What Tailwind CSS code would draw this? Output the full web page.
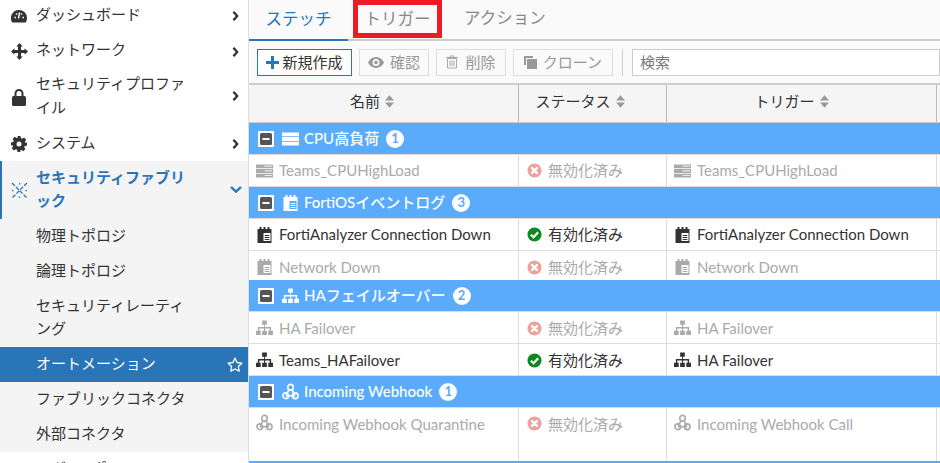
<!DOCTYPE html>
<html lang="ja">
<head>
  <meta charset="UTF-8">
  <title>オートメーション</title>
  <script src="https://cdn.jsdelivr.net/npm/@tailwindcss/browser@4"></script>
</head>
<body class="h-[463px] w-[940px] overflow-hidden bg-white font-['Lato','Noto_Sans_CJK_JP',sans-serif] text-[15px] text-[#333]">

<svg class="hidden">
  <symbol id="i-server" viewBox="0 0 18 16"><path fill="currentColor" d="M0 1h18v4H0zM0 6h18v4H0zM0 11h18v4H0z"/><path fill="#fff" fill-opacity=".75" d="M9 2.200h8v1.200H9zM9 7.200h8v1.200H9zM9 12.200h8v1.200H9z"/></symbol>
  <symbol id="i-log" viewBox="0 0 16 16"><path fill="currentColor" d="M1 2h2V0h2v2h2V0h2v2h2V0h2v2h2v14H1zM7 6v8h7V6z"/><path fill="currentColor" d="M8.200 8h4.600v1H8.200zM8.200 10h4.600v1H8.200zM8.200 12h4.600v1H8.200z"/></symbol>
  <symbol id="i-site" viewBox="0 0 18 16"><path fill="currentColor" d="M6.500 0h5v4.500h-2V7h6.500v4h2v4.500h-5V11h1.500V8.500H9.700V11h1.800v4.500h-5V11h2V8.500H3.500V11H5v4.500H0V11h2V7h6.500V4.500h-2z"/></symbol>
  <symbol id="i-hook" viewBox="0 0 18 18"><g fill="none" stroke="currentColor" stroke-width="1.700"><circle cx="9" cy="4.500" r="3"/><circle cx="4" cy="13.500" r="3"/><circle cx="14" cy="13.500" r="3"/><path d="M7.500 7 4.500 12.500M4 13.500h10M10.500 7l3 5.500"/></g></symbol>
  <symbol id="i-x" viewBox="0 0 16 16"><circle cx="8" cy="8" r="7.500" fill="currentColor"/><path stroke="#fff" stroke-width="2.600" stroke-linecap="round" d="M5.400 5.400l5.200 5.200M10.600 5.400l-5.200 5.200"/></symbol>
  <symbol id="i-ok" viewBox="0 0 16 16"><circle cx="8" cy="8" r="7.500" fill="currentColor"/><path fill="none" stroke="#fff" stroke-width="2.400" d="M4.200 8.200l2.800 2.700 4.900-5.200"/></symbol>
  <symbol id="i-sort" viewBox="0 0 10 14"><path fill="currentColor" d="M5 0l5 6H0zM5 14l-5-6h10z"/></symbol>
  <symbol id="i-right" viewBox="0 0 8 12"><path fill="none" stroke="currentColor" stroke-width="2.800" d="M1.500 1l4.500 5-4.500 5"/></symbol>
  <symbol id="i-minus" viewBox="0 0 16 16"><path fill="#fff" d="M0 0h16v16H0z"/><rect x="2" y="2" width="12" height="12" rx="1.500" fill="#555"/><path fill="#fff" d="M4.500 7h7v2h-7z"/></symbol>
</svg>

<div class="flex h-full">
  <!-- Sidebar -->
  <nav class="h-full w-[249px] shrink-0 overflow-hidden border-r border-[#ddd]">
    <div class="-mt-[4px]">
      <a class="flex h-[36px] items-center"><span class="flex w-[36px] justify-center pl-[2px] pt-[4px]"><svg class="h-[14px] w-[16px]" viewBox="0 1 16 13"><path fill="#333" d="M8 1.500a8 8 0 0 1 8 8c0 1.700-.5 3.200-1.300 4.500H1.300A8 8 0 0 1 8 1.500z"/><path stroke="#fff" stroke-width="1.500" d="M8.500 4 7.500 10M3.500 9h1.500M11.500 9H13M5 5l1 1M11 5l-1 1"/></svg></span><span>ダッシュボード</span><svg class="ml-auto mr-[9px] mt-[4px] h-[10px] w-[7px]"><use href="#i-right"/></svg></a>
      <a class="flex h-[35px] items-center"><span class="flex w-[36px] justify-center pl-[2px] pt-[3px]"><svg class="h-[17px] w-[17px]" viewBox="0 0 17 17"><path fill="#333" d="M8.500 0l3.200 3.400H10v3.600h3.600V5.300L17 8.500l-3.400 3.200V10H10v3.600h1.700L8.500 17l-3.200-3.400H7V10H3.400v1.700L0 8.500l3.400-3.200V7H7V3.400H5.300z"/></svg></span><span>ネットワーク</span><svg class="ml-auto mr-[9px] mt-[4px] h-[10px] w-[7px]"><use href="#i-right"/></svg></a>
      <a class="flex h-[58px] items-center"><span class="flex w-[36px] justify-center pl-[2px] pt-[2px]"><svg class="h-[17px] w-[14px]" viewBox="0 0 14 17"><path fill="none" stroke="#333" stroke-width="2" d="M3.500 8V4.500a3.500 3.500 0 0 1 7 0V8"/><rect y="7" width="14" height="10" rx="1.500" fill="#333"/></svg></span><span class="pb-[2px] leading-[24px]">セキュリティプロファ<br>イル</span><svg class="ml-auto mr-[9px] h-[10px] w-[7px]"><use href="#i-right"/></svg></a>
      <a class="flex h-[36px] items-center"><span class="flex w-[36px] justify-center pl-[2px] pt-[1px]"><svg class="h-[16px] w-[16px]" viewBox="0 0 16 16"><path fill="#333" d="M6.500 0h3l.4 2.200 1.300.6 1.900-1.200 2.100 2.100-1.200 1.900.6 1.300L16 6.500v3l-2.200.4-.6 1.300 1.200 1.900-2.100 2.100-1.900-1.200-1.300.6L9.500 16h-3l-.4-2.200-1.300-.6-1.900 1.200-2.100-2.100 1.200-1.900-.6-1.300L0 9.500v-3l2.200-.4.600-1.300L1.600 2.900l2.100-2.100 1.900 1.200 1.300-.6zM8 5.500a2.500 2.500 0 1 0 0 5 2.500 2.500 0 0 0 0-5z"/></svg></span><span class="pb-[1px]">システム</span><svg class="ml-auto mr-[9px] mt-[2px] h-[10px] w-[7px]"><use href="#i-right"/></svg></a>

      <div class="bg-[#f4f4f4]">
        <a class="flex h-[58px] items-center border-l-2 border-[#2a74b8] font-bold text-[#2a74b8]"><span class="flex w-[34px] justify-center pl-[1px]"><svg class="h-[17px] w-[17px]" viewBox="0 0 17 17"><path fill="none" stroke="#2a74b8" stroke-width="1.300" stroke-dasharray="4 1.500" d="M1 1l15 15M16 1 1 16"/><path fill="#2a74b8" d="M8 1h1.200v1.500H8zM8 14.500h1.200V16H8zM1 8h1.500v1.200H1zM14.500 8H16v1.200h-1.500z"/></svg></span><span class="pb-[2px] leading-[23px]">セキュリティファブリ<br>ック</span><svg class="ml-auto mr-[6px] h-[8px] w-[12px]" viewBox="0 0 12 8"><path fill="none" stroke="#2a74b8" stroke-width="2.400" d="M1 1l5 4.700L11 1"/></svg></a>
        <a class="flex h-[35px] items-center pb-[2px] pl-[36px]">物理トポロジ</a>
        <a class="flex h-[35px] items-center pb-[2px] pl-[36px]">論理トポロジ</a>
        <a class="flex h-[58px] items-center pb-[2px] pl-[36px] leading-[23px]"><span>セキュリティレーティ<br>ング</span></a>
        <a class="flex h-[35px] items-center bg-[#2a74b8] pb-[2px] pl-[36px] text-white">オートメーション<svg class="ml-auto mr-[5px] mt-[2px] h-[16px] w-[16px]" viewBox="0 0 16 16"><path fill="none" stroke="#fff" stroke-width="1.300" stroke-linejoin="round" d="M8 1.200l2.100 4.300 4.700.7-3.400 3.300.8 4.700L8 12l-4.200 2.200.8-4.700L1.200 6.200l4.700-.7z"/></svg></a>
        <a class="flex h-[35px] items-center pb-[2px] pl-[36px]">ファブリックコネクタ</a>
        <a class="flex h-[35px] items-center pb-[2px] pl-[36px]">外部コネクタ</a>
      </div>
      <a class="flex h-[35px] items-center pb-[2px] pl-[36px]">ログ&amp;レポート</a>
    </div>
  </nav>

  <!-- Main -->
  <main class="min-w-0 flex-1 bg-[#fafafa]">
    <!-- Tabs -->
    <div class="flex h-[41px] border-b-2 border-[#ccc] text-[16.5px] text-[#888]">
      <a class="-mb-[2px] flex h-[41px] w-[99px] items-center justify-center border-b-2 border-[#2a74b8] text-[#2a74b8]">ステッチ</a>
      <a class="ml-[5px] flex h-[38px] w-[89px] items-center justify-center border-[5px] border-[#ed1c24]">トリガー</a>
      <a class="ml-[22px] flex h-[36px] items-center">アクション</a>
    </div>

    <!-- Toolbar -->
    <div class="flex h-[42px] items-center gap-[7px] pl-[8px] text-[#999]">
      <button class="flex h-[27px] w-[95px] items-center justify-center gap-[3px] border border-[#2a74b8] bg-white text-[#2a74b8]"><svg class="h-[13px] w-[13px]" viewBox="0 0 13 13"><path fill="#2a74b8" d="M5 0h3v5h5v3H8v5H5V8H0V5h5z"/></svg><span class="text-[#333]">新規作成</span></button>
      <button class="flex h-[27px] w-[70px] items-center justify-center gap-[6px] border border-[#ddd]"><svg class="h-[11px] w-[16px]" viewBox="0 0 16 11"><path fill="#999" fill-rule="evenodd" d="M8 0c3.500 0 6.500 2.200 8 5.500C14.500 8.800 11.500 11 8 11S1.500 8.800 0 5.500C1.500 2.200 4.500 0 8 0zm0 2a3.500 3.500 0 1 0 0 7 3.500 3.500 0 0 0 0-7z"/><circle cx="8" cy="5.500" r="1.800" fill="#999"/></svg>確認</button>
      <button class="flex h-[27px] w-[70px] items-center justify-center gap-[7px] border border-[#ddd]"><svg class="h-[14px] w-[12px]" viewBox="0 0 12 14"><path fill="none" stroke="#aaa" d="M1.500 3.500h9v9.500h-9zM0 2.500h12M4 2.500V1h4v1.500M4 5.500V11M6 5.500V11M8 5.500V11"/></svg>削除</button>
      <button class="flex h-[27px] w-[100px] items-center justify-center gap-[6px] border border-[#ddd]"><svg class="h-[13px] w-[13px]" viewBox="0 0 13 13"><path fill="#999" d="M3 3h10v10H3z"/><path fill="#999" d="M0 0h9v2H2v7H0z"/></svg>クローン</button>
      <span class="ml-[2px] h-[27px] w-px bg-[#ccc]"></span>
      <input class="ml-[2px] h-[27px] flex-1 border border-[#ccc] bg-white px-[7px] text-[#333] placeholder:text-[#777]" placeholder="検索">
    </div>

    <!-- Header -->
    <div class="flex h-[40px] border-t-2 border-b border-[#ccc] bg-[#f5f5f5]">
      <div class="flex w-[270px] items-center justify-center gap-[5px] border-r border-[#bbb] pb-[4px] pr-[23px]">名前<svg class="h-[13px] w-[9px] text-[#999]"><use href="#i-sort"/></svg></div>
      <div class="flex w-[148px] items-center justify-center gap-[5px] border-r border-[#bbb] pb-[4px] pr-[25px]">ステータス<svg class="h-[13px] w-[9px] text-[#999]"><use href="#i-sort"/></svg></div>
      <div class="flex w-[270px] items-center justify-center gap-[5px] border-r border-[#bbb] pb-[4px] pr-[20px]">トリガー<svg class="h-[13px] w-[9px] text-[#999]"><use href="#i-sort"/></svg></div>
    </div>

    <!-- Table -->
    <div class="bg-white">
      <div class="flex h-[32px] items-center border-b border-[#ddd] bg-[#5aabfc] font-medium text-white"><svg class="ml-[9px] h-[16px] w-[16px]"><use href="#i-minus"/></svg><svg class="ml-[8px] h-[16px] w-[17px]"><use href="#i-server"/></svg><span class="ml-[5px]">CPU高負荷</span><span class="ml-[7px] flex h-[18px] w-[18px] items-center justify-center rounded-full bg-white text-[13px] font-bold text-[#5aabfc]">1</span></div>
      <div class="flex h-[32px] border-b border-[#ddd] text-[#aaa]">
        <div class="flex w-[270px] items-center border-r border-[#ddd] pl-[7px]"><svg class="mr-[6px] h-[16px] w-[17px]"><use href="#i-server"/></svg>Teams_CPUHighLoad</div>
        <div class="flex w-[148px] items-center border-r border-[#ddd] pl-[8px]"><svg class="mr-[6px] h-[15px] w-[15px] text-[#eba29c]"><use href="#i-x"/></svg>無効化済み</div>
        <div class="flex w-[270px] items-center border-r border-[#ddd] pl-[7px]"><svg class="mr-[6px] h-[16px] w-[17px]"><use href="#i-server"/></svg>Teams_CPUHighLoad</div>
      </div>

      <div class="flex h-[32px] items-center border-b border-[#ddd] bg-[#5aabfc] font-medium text-white"><svg class="ml-[9px] h-[16px] w-[16px]"><use href="#i-minus"/></svg><svg class="ml-[8px] h-[16px] w-[17px]"><use href="#i-log"/></svg><span class="ml-[5px]">FortiOSイベントログ</span><span class="ml-[7px] flex h-[18px] w-[18px] items-center justify-center rounded-full bg-white text-[13px] font-bold text-[#5aabfc]">3</span></div>
      <div class="flex h-[32px] border-b border-[#ddd]">
        <div class="flex w-[270px] items-center border-r border-[#ddd] pl-[7px]"><svg class="mr-[6px] h-[16px] w-[17px]"><use href="#i-log"/></svg>FortiAnalyzer Connection Down</div>
        <div class="flex w-[148px] items-center border-r border-[#ddd] pl-[8px]"><svg class="mr-[6px] h-[15px] w-[15px] text-[#0b8a1e]"><use href="#i-ok"/></svg>有効化済み</div>
        <div class="flex w-[270px] items-center border-r border-[#ddd] pl-[7px]"><svg class="mr-[6px] h-[16px] w-[17px]"><use href="#i-log"/></svg>FortiAnalyzer Connection Down</div>
      </div>
      <div class="flex h-[29px] text-[#aaa]">
        <div class="flex w-[270px] items-center border-r border-[#ddd] pl-[7px] pt-[3px]"><svg class="mr-[6px] h-[16px] w-[17px]"><use href="#i-log"/></svg>Network Down</div>
        <div class="flex w-[148px] items-center border-r border-[#ddd] pl-[8px] pt-[3px]"><svg class="mr-[6px] h-[15px] w-[15px] text-[#eba29c]"><use href="#i-x"/></svg>無効化済み</div>
        <div class="flex w-[270px] items-center border-r border-[#ddd] pl-[7px] pt-[3px]"><svg class="mr-[6px] h-[16px] w-[17px]"><use href="#i-log"/></svg>Network Down</div>
      </div>

      <div class="flex h-[32px] items-center border-b border-[#ddd] bg-[#5aabfc] font-medium text-white"><svg class="ml-[9px] h-[16px] w-[16px]"><use href="#i-minus"/></svg><svg class="ml-[8px] h-[16px] w-[17px]"><use href="#i-site"/></svg><span class="ml-[5px]">HAフェイルオーバー</span><span class="ml-[7px] flex h-[18px] w-[18px] items-center justify-center rounded-full bg-white text-[13px] font-bold text-[#5aabfc]">2</span></div>
      <div class="flex h-[32px] border-b border-[#ddd] text-[#aaa]">
        <div class="flex w-[270px] items-center border-r border-[#ddd] pl-[7px] pt-[1px]"><svg class="mr-[6px] h-[16px] w-[17px]"><use href="#i-site"/></svg>HA Failover</div>
        <div class="flex w-[148px] items-center border-r border-[#ddd] pl-[8px] pt-[1px]"><svg class="mr-[6px] h-[15px] w-[15px] text-[#eba29c]"><use href="#i-x"/></svg>無効化済み</div>
        <div class="flex w-[270px] items-center border-r border-[#ddd] pl-[7px] pt-[1px]"><svg class="mr-[6px] h-[16px] w-[17px]"><use href="#i-site"/></svg>HA Failover</div>
      </div>
      <div class="flex h-[32px] border-b border-[#ddd]">
        <div class="flex w-[270px] items-center border-r border-[#ddd] pl-[7px] pt-[1px]"><svg class="mr-[6px] h-[16px] w-[17px]"><use href="#i-site"/></svg>Teams_HAFailover</div>
        <div class="flex w-[148px] items-center border-r border-[#ddd] pl-[8px] pt-[1px]"><svg class="mr-[6px] h-[15px] w-[15px] text-[#0b8a1e]"><use href="#i-ok"/></svg>有効化済み</div>
        <div class="flex w-[270px] items-center border-r border-[#ddd] pl-[7px] pt-[1px]"><svg class="mr-[6px] h-[16px] w-[17px]"><use href="#i-site"/></svg>HA Failover</div>
      </div>

      <div class="flex h-[32px] items-center border-b border-[#ddd] bg-[#5aabfc] font-medium text-white"><svg class="ml-[9px] h-[16px] w-[16px]"><use href="#i-minus"/></svg><svg class="ml-[8px] h-[17px] w-[17px]"><use href="#i-hook"/></svg><span class="ml-[5px]">Incoming Webhook</span><span class="ml-[7px] flex h-[18px] w-[18px] items-center justify-center rounded-full bg-white text-[13px] font-bold text-[#5aabfc]">1</span></div>
      <div class="flex h-[55px] border-b-2 border-[#5aabfc] text-[#aaa]">
        <div class="flex h-full w-[270px] items-start border-r border-[#ddd] pl-[7px] pt-[5px]"><svg class="mr-[6px] mt-[1px] h-[17px] w-[17px]"><use href="#i-hook"/></svg>Incoming Webhook Quarantine</div>
        <div class="flex h-full w-[148px] items-start border-r border-[#ddd] pl-[8px] pt-[5px]"><svg class="mr-[6px] mt-[3px] h-[15px] w-[15px] text-[#eba29c]"><use href="#i-x"/></svg>無効化済み</div>
        <div class="flex h-full w-[270px] items-start border-r border-[#ddd] pl-[7px] pt-[5px]"><svg class="mr-[6px] mt-[1px] h-[17px] w-[17px]"><use href="#i-hook"/></svg>Incoming Webhook Call</div>
      </div>
    </div>
  </main>
</div>
</body>
</html>
